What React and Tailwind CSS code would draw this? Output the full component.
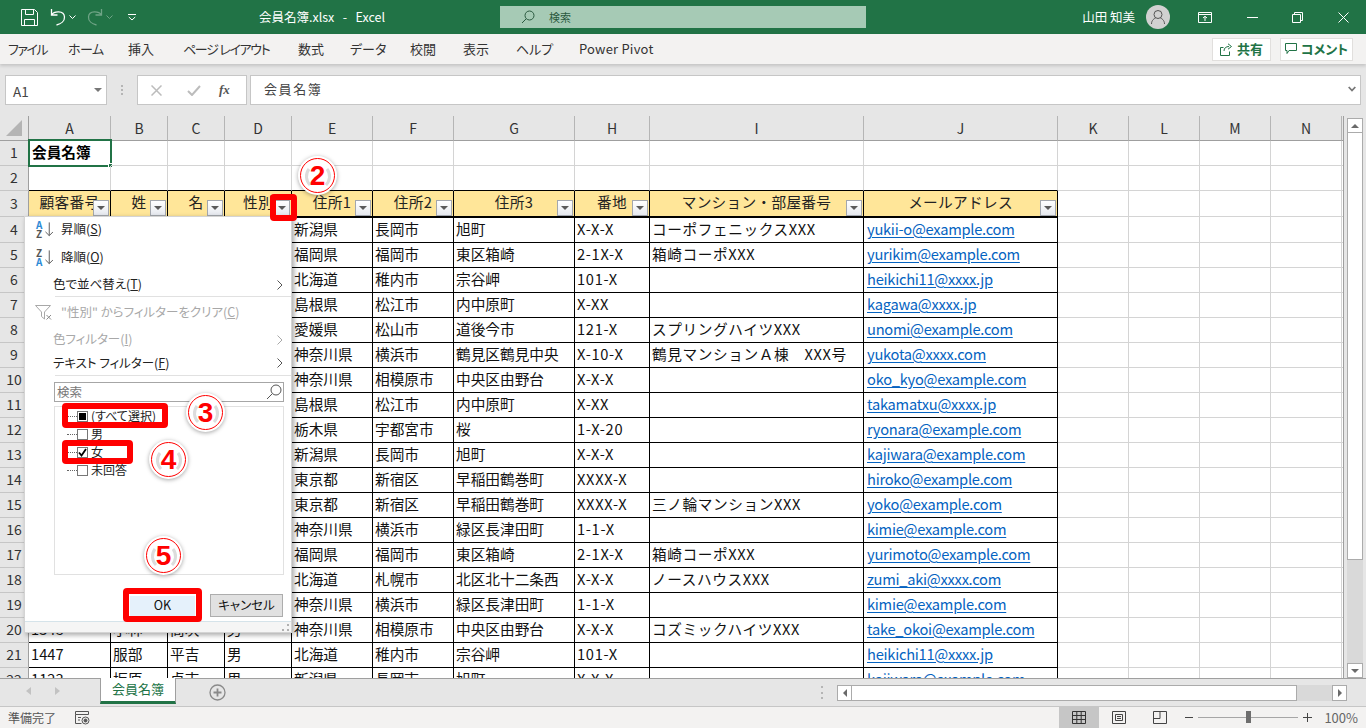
import React from "react";

const FONT = "font-['Noto_Sans_CJK_JP','Liberation_Sans',sans-serif]";

const COLS = ["A", "B", "C", "D", "E", "F", "G", "H", "I", "J", "K", "L", "M", "N"];

const RECORDS = [
  [4, "新潟県", "長岡市", "旭町", "X-X-X", "コーポフェニックスXXX", "yukii-o@example.com"],
  [5, "福岡県", "福岡市", "東区箱崎", "2-1X-X", "箱崎コーポXXX", "yurikim@example.com"],
  [6, "北海道", "稚内市", "宗谷岬", "101-X", "", "heikichi11@xxxx.jp"],
  [7, "島根県", "松江市", "内中原町", "X-XX", "", "kagawa@xxxx.jp"],
  [8, "愛媛県", "松山市", "道後今市", "121-X", "スプリングハイツXXX", "unomi@example.com"],
  [9, "神奈川県", "横浜市", "鶴見区鶴見中央", "X-10-X", "鶴見マンションＡ棟　XXX号", "yukota@xxxx.com"],
  [10, "神奈川県", "相模原市", "中央区由野台", "X-X-X", "", "oko_kyo@example.com"],
  [11, "島根県", "松江市", "内中原町", "X-XX", "", "takamatxu@xxxx.jp"],
  [12, "栃木県", "宇都宮市", "桜", "1-X-20", "", "ryonara@example.com"],
  [13, "新潟県", "長岡市", "旭町", "X-X-X", "", "kajiwara@example.com"],
  [14, "東京都", "新宿区", "早稲田鶴巻町", "XXXX-X", "", "hiroko@example.com"],
  [15, "東京都", "新宿区", "早稲田鶴巻町", "XXXX-X", "三ノ輪マンションXXX", "yoko@example.com"],
  [16, "神奈川県", "横浜市", "緑区長津田町", "1-1-X", "", "kimie@example.com"],
  [17, "福岡県", "福岡市", "東区箱崎", "2-1X-X", "箱崎コーポXXX", "yurimoto@example.com"],
  [18, "北海道", "札幌市", "北区北十二条西", "X-X-X", "ノースハウスXXX", "zumi_aki@xxxx.com"],
  [19, "神奈川県", "横浜市", "緑区長津田町", "1-1-X", "", "kimie@example.com"],
  [20, "神奈川県", "相模原市", "中央区由野台", "X-X-X", "コズミックハイツXXX", "take_okoi@example.com", "1348", "小林", "高次", "男"],
  [21, "北海道", "稚内市", "宗谷岬", "101-X", "", "heikichi11@xxxx.jp", "1447", "服部", "平吉", "男"],
  [22, "新潟県", "長岡市", "旭町", "X-X-X", "", "kajiwara@example.com", "1123", "坂原", "卓吉", "男"],
];

const HEADERS = ["顧客番号", "姓", "名", "性別", "住所1", "住所2", "住所3", "番地", "マンション・部屋番号", "メールアドレス"];

const TABS = [
  ["ファイル", "w-[60px] tracking-[-1.5px]"],
  ["ホーム", "w-[60px] tracking-[-0.5px]"],
  ["挿入", "w-[55px]"],
  ["ページ レイアウト", "w-[115px] tracking-[-1.3px]"],
  ["数式", "w-[52px]"],
  ["データ", "w-[60px]"],
  ["校閲", "w-[53px]"],
  ["表示", "w-[53px]"],
  ["ヘルプ", "w-[63px]"],
  ["Power Pivot", "w-[80px] tracking-[0.2px]"],
];

const SHEET_GRID =
  "grid grid-cols-[29px_82px_57px_57px_67px_81px_81px_121px_75px_214px_194px_71px_71px_71px_71px_2px] grid-rows-[25px_25px_25px_26px_26px] auto-rows-[25px]";

function FilterButton() {
  return (
    <span className="absolute right-[1px] bottom-[0px] flex h-[16px] w-[16px] items-center justify-center border border-[#a3a7ad] bg-gradient-to-b from-[#ffffff] to-[#e6e9ef]">
      <svg width="8" height="4" viewBox="0 0 8 4">
        <path d="M0 0h8L4 4z" fill="#5a5a5a" />
      </svg>
    </span>
  );
}

function RowHead({ n }) {
  return (
    <div className="flex items-center justify-center border-r border-b border-r-[#9f9f9f] border-b-[#c6c6c6] bg-[#e6e6e6] pb-[1px] text-[14px] text-[#333]">
      {n}
    </div>
  );
}

function Cell({ children, black, top, bottom, className = "" }) {
  const border = black ? "border-r border-b border-black" : "border-r border-b border-[#d4d4d4]";
  return (
    <div
      className={`relative flex items-center overflow-hidden whitespace-nowrap pb-[2px] pl-[2px] text-[14.67px] text-[#111] ${border} ${top ? "border-t border-t-black" : ""} ${bottom ? "border-b-black" : ""} ${className}`}
    >
      {children}
    </div>
  );
}

function Sheet() {
  return (
    <div className="relative h-[562px] w-[1344px] overflow-hidden border-r border-[#9f9f9f] bg-white">
      <div className={SHEET_GRID}>
        <div className="flex items-center justify-center border-r border-b border-[#9f9f9f] bg-[#e6e6e6]">
          <svg width="18" height="18" viewBox="0 0 18 18">
            <path d="M17 1v16H1z" fill="#b4b4b4" />
          </svg>
        </div>
        {COLS.map((c) => (
          <div
            key={c}
            className="flex items-center justify-center border-r border-b border-r-[#b5b5b5] border-b-[#9f9f9f] bg-[#e6e6e6] text-[14px] text-[#333]"
          >
            {c}
          </div>
        ))}
        <div className="border-b border-[#9f9f9f] bg-[#e6e6e6]" />

        {/* rows 1 and 2 */}
        <RowHead n={1} />
        <Cell className="font-bold !overflow-visible">
          <span className="pl-[1px] text-black">会員名簿</span>
          <span className="absolute -top-[2px] -left-[1px] h-[28px] w-[84px] border-2 border-[#217346]" />
          <span className="absolute top-[22px] left-[79px] h-[5px] w-[5px] border border-white bg-[#217346]" />
        </Cell>
        {COLS.slice(1).map((c) => (
          <Cell key={c} />
        ))}
        <div className="border-b border-[#d4d4d4]" />

        <RowHead n={2} />
        {COLS.map((c, i) => (
          <Cell key={c} bottom={i < 10} />
        ))}
        <div className="border-b border-[#d4d4d4]" />

        {/* table header */}
        <RowHead n={3} />
        {COLS.map((c, i) =>
          i < 10 ? (
            <div
              key={c}
              className="relative flex items-center justify-center overflow-hidden whitespace-nowrap border-r border-b border-black bg-[#ffe699] pb-[3px] text-[14.67px] tracking-[0.3px] text-[#222]"
            >
              {HEADERS[i]}
              <FilterButton />
            </div>
          ) : (
            <Cell key={c} />
          ),
        )}
        <div className="border-b border-[#d4d4d4]" />

        {/* table body */}
        {RECORDS.map((r) => {
          const left = r.length > 7 ? r.slice(7) : ["", "", "", ""];
          const first = r[0] === 4;
          return (
            <React.Fragment key={r[0]}>
              <RowHead n={r[0]} />
              {left.map((v, i) => (
                <Cell key={i} black top={first}>
                  {v}
                </Cell>
              ))}
              {r.slice(1, 4).map((v, i) => (
                <Cell key={i} black top={first}>
                  {v}
                </Cell>
              ))}
              <Cell black top={first} className="tracking-[0.7px]">
                {r[4]}
              </Cell>
              <Cell black top={first} className="tracking-[0.6px]">
                {r[5]}
              </Cell>
              <Cell black top={first}>
                <span className="pl-[1px] tracking-[-0.25px] text-[#0563c1] underline underline-offset-2">{r[6]}</span>
              </Cell>
              <Cell />
              <Cell />
              <Cell />
              <Cell />
              <div className="border-b border-[#d4d4d4]" />
            </React.Fragment>
          );
        })}
      </div>
    </div>
  );
}

function VScroll() {
  return (
    <div className="flex flex-1 flex-col items-center bg-[#e6e6e6] pt-[2px]">
      <div className="flex h-[560px] w-[16px] flex-col bg-[#d9d9d9]">
        <div className="flex h-[15px] items-center justify-center border border-[#ababab] bg-white">
          <svg width="8" height="4" viewBox="0 0 8 4">
            <path d="M0 4h8L4 0z" fill="#6a6a6a" />
          </svg>
        </div>
        <div className="h-[427px] border-x border-b border-[#ababab] bg-white" />
        <div className="mt-auto flex h-[15px] items-center justify-center border border-[#ababab] bg-white">
          <svg width="8" height="4" viewBox="0 0 8 4">
            <path d="M0 0h8L4 4z" fill="#6a6a6a" />
          </svg>
        </div>
      </div>
    </div>
  );
}

function TitleBar() {
  return (
    <div className="relative flex h-[34px] items-center bg-[#217346] text-white">
      <svg className="ml-[21px]" width="17" height="17" viewBox="0 0 17 17" fill="none" stroke="#fff" strokeWidth="1">
        <path d="M.5.5h13l3 3v13H.5z" />
        <path d="M4.5.5v5h8v-5M3.5 16.5v-6h10v6" />
      </svg>
      <svg className="ml-[12px]" width="16" height="18" viewBox="0 0 16 18" fill="none" stroke="#fff" strokeWidth="1.3">
        <path d="M1.5 1v6h6M1.5 7C4 3 14 2 14.5 9c.2 4-3.5 7-8 8" />
      </svg>
      <svg className="ml-[3px]" width="7" height="4" viewBox="0 0 7 4" fill="none" stroke="#fff">
        <path d="M.5.5l3 3 3-3" />
      </svg>
      <svg className="ml-[11px]" width="16" height="18" viewBox="0 0 16 18" fill="none" stroke="#6fa486" strokeWidth="1.3">
        <path d="M14.5 1v6h-6M14.5 7C12 3 2 2 1.5 9c-.2 4 3.5 7 8 8" />
      </svg>
      <svg className="ml-[3px]" width="7" height="4" viewBox="0 0 7 4" fill="none" stroke="#6fa486">
        <path d="M.5.5l3 3 3-3" />
      </svg>
      <svg className="ml-[15px]" width="8" height="7" viewBox="0 0 8 7" fill="none" stroke="#fff">
        <path d="M0 .5h8M.8 3l3.2 3 3.2-3" />
      </svg>
      <span className="ml-[123px] w-[241px] whitespace-pre text-[12.5px]">会員名簿.xlsx   -   Excel</span>
      <div className="flex h-[22px] w-[366px] items-center bg-[#a6cab5] text-[#2b5a40]">
        <svg className="ml-[21px]" width="14" height="14" viewBox="0 0 14 14" fill="none" stroke="#2b5a40">
          <circle cx="8.5" cy="5.5" r="4.5" />
          <path d="M5.2 8.8L1 13" />
        </svg>
        <span className="ml-[14px] text-[11px]">検索</span>
      </div>
      <span className="ml-auto whitespace-pre text-[12.5px]">山田 知美</span>
      <div className="ml-[11px] flex h-[24px] w-[24px] items-center justify-center rounded-full bg-[#d1d1d1]">
        <svg width="16" height="16" viewBox="0 0 16 16" fill="none" stroke="#555">
          <circle cx="8" cy="5.5" r="4" />
          <path d="M1.5 15c0-4 3-5.500 4-6M14.500 15c0-4-3-5.500-4-6" />
        </svg>
      </div>
      <svg className="ml-[28px]" width="14" height="11" viewBox="0 0 14 11" fill="none" stroke="#fff">
        <path d="M.5.5h13v10H.5zM.5 2.500h13M7 9V4.500M5 6l2-1.700L9 6" />
      </svg>
      <svg className="ml-[35px]" width="11" height="1" viewBox="0 0 11 1">
        <path d="M0 .5h11" stroke="#fff" />
      </svg>
      <svg className="ml-[34px]" width="11" height="11" viewBox="0 0 11 11" fill="none" stroke="#fff">
        <path d="M.5 2.500h8v8h-8zM2.500 2.500v-2h8v8h-2" />
      </svg>
      <svg className="mr-[17px] ml-[35px]" width="11" height="11" viewBox="0 0 11 11" stroke="#fff">
        <path d="M.5.5l10 10M10.500.5l-10 10" />
      </svg>
    </div>
  );
}

function RibbonTabs() {
  return (
    <div className="z-10 flex h-[30px] items-center bg-[#f3f2f1] pl-[8px] text-[13px] text-[#333] [font-feature-settings:'palt'] shadow-[0_2px_3px_rgba(0,0,0,0.15)]">
      {TABS.map(([t, w]) => (
        <span key={t} className={`${w} shrink-0 whitespace-pre`}>
          {t}
        </span>
      ))}
      <button className="ml-auto flex h-[23px] w-[59px] items-center justify-center gap-[4px] border border-[#e1dfdd] bg-white text-[13px] font-bold text-[#217346]">
        <svg width="13" height="13" viewBox="0 0 13 13" fill="none" stroke="#217346">
          <path d="M.5 4.500h3M.5 4.500v8h9v-4M4 8c0-3 2-4.500 5-4.500M8 .8l3.500 2.700L8 6.200" />
        </svg>
        共有
      </button>
      <button className="mr-[13px] ml-[9px] flex h-[23px] w-[73px] items-center justify-center gap-[4px] border border-[#e1dfdd] bg-white text-[13px] font-bold text-[#217346]">
        <svg width="12" height="12" viewBox="0 0 12 12" fill="none" stroke="#217346">
          <path d="M.5.500h11v7H4L2 10.500v-3H.5z" />
        </svg>
        コメント
      </button>
    </div>
  );
}

function FormulaBar() {
  return (
    <div className="flex h-[52px] items-start bg-[#e6e6e6] pt-[11px] pl-[5px]">
      <div className="flex h-[30px] w-[102px] items-center border border-[#c6c6c6] bg-white pl-[7px] text-[13.5px] text-[#444]">
        <span className="pt-[3px]">A1</span>
        <svg className="mr-[4px] ml-auto" width="8" height="4" viewBox="0 0 8 4">
          <path d="M0 0h8L4 4z" fill="#777" />
        </svg>
      </div>
      <div className="flex h-[30px] w-[30px] flex-col items-center justify-center gap-[2px]">
        <span className="h-[2px] w-[2px] bg-[#b5b5b5]" />
        <span className="h-[2px] w-[2px] bg-[#b5b5b5]" />
        <span className="h-[2px] w-[2px] bg-[#b5b5b5]" />
      </div>
      <div className="flex h-[30px] w-[110px] items-center border border-[#c6c6c6] bg-white">
        <svg className="ml-[13px]" width="11" height="11" viewBox="0 0 11 11" stroke="#bcbcbc" strokeWidth="1.5">
          <path d="M.5.5l10 10M10.500.5l-10 10" />
        </svg>
        <svg className="ml-[25px]" width="14" height="11" viewBox="0 0 14 11" fill="none" stroke="#bcbcbc" strokeWidth="2">
          <path d="M1 6l4 4 8-9" />
        </svg>
        <span className="ml-[18px] font-['Liberation_Serif',serif] text-[13px] font-bold italic text-[#555]">fx</span>
      </div>
      <div className="ml-[3px] flex h-[30px] w-[1111px] items-center border border-[#c6c6c6] bg-white pb-[2px] pl-[13px] text-[13px] tracking-[1.6px] text-[#444]">
        会員名簿
        <svg className="mr-[4px] ml-auto" width="8" height="6" viewBox="0 0 8 6" fill="none" stroke="#777" strokeWidth="1.8">
          <path d="M.7 1L4 4.500 7.300 1" />
        </svg>
      </div>
    </div>
  );
}

function SheetTabs() {
  return (
    <div className="flex h-[28px] items-start border-t border-[#9f9f9f] bg-[#e6e6e6]">
      <svg className="mt-[8px] ml-[26px]" width="5" height="8" viewBox="0 0 5 8">
        <path d="M5 0v8L0 4z" fill="#c2c2c2" />
      </svg>
      <svg className="mt-[8px] ml-[24px]" width="5" height="8" viewBox="0 0 5 8">
        <path d="M0 0v8l5-4z" fill="#c2c2c2" />
      </svg>
      <div className="-mt-[1px] ml-[40px] flex h-[26px] w-[76px] items-center justify-center border-x border-b-[3px] border-x-[#9f9f9f] border-b-[#217346] bg-white pb-[1px] text-[13px] text-[#217346]">
        会員名簿
      </div>
      <svg className="mt-[5px] ml-[33px]" width="17" height="17" viewBox="0 0 17 17" fill="none" stroke="#8a8a8a">
        <circle cx="8.500" cy="8.500" r="7.500" strokeWidth="1.300" />
        <path d="M4.500 8.500h8M8.500 4.500v8" strokeWidth="1.800" />
      </svg>
      <div className="mt-[6px] ml-[595px] flex h-[15px] flex-col justify-between py-[1px]">
        <span className="h-[2px] w-[2px] bg-[#b5b5b5]" />
        <span className="h-[2px] w-[2px] bg-[#b5b5b5]" />
        <span className="h-[2px] w-[2px] bg-[#b5b5b5]" />
      </div>
      <div className="mt-[6px] ml-[14px] flex h-[16px] w-[510px] bg-[#d9d9d9]">
        <div className="flex w-[15px] items-center justify-center border border-[#ababab] bg-white">
          <svg width="4" height="8" viewBox="0 0 4 8">
            <path d="M4 0v8L0 4z" fill="#6a6a6a" />
          </svg>
        </div>
        <div className="w-[445px] border-y border-r border-[#ababab] bg-white" />
        <div className="ml-auto flex w-[15px] items-center justify-center border border-[#ababab] bg-white">
          <svg width="4" height="8" viewBox="0 0 4 8">
            <path d="M0 0v8l4-4z" fill="#6a6a6a" />
          </svg>
        </div>
      </div>
    </div>
  );
}

function StatusBar() {
  return (
    <div className="flex h-[22px] items-center border-t border-[#c6c6c6] bg-[#f3f2f1] text-[#555]">
      <span className="ml-[8px] text-[12px]">準備完了</span>
      <svg className="ml-[19px]" width="15" height="14" viewBox="0 0 15 14" fill="none" stroke="#555">
        <path d="M.5 3.500V.5h13v3M.5 3.500h13M.5 3.500v9h6M3 6.500h3M3 9h2" />
        <circle cx="10.500" cy="9.500" r="3.500" />
        <circle cx="10.500" cy="9.500" r="1.500" fill="#555" />
      </svg>
      <div className="ml-auto flex h-[21px] w-[40px] items-center justify-center bg-[#c6c6c6]">
        <svg width="14" height="13" viewBox="0 0 14 13" fill="none" stroke="#333">
          <path d="M.5.5h13v12H.5zM.5 4.500h13M.5 8.500h13M4.800.5v12M9.200.5v12" />
        </svg>
      </div>
      <svg className="ml-[13px]" width="14" height="13" viewBox="0 0 14 13" fill="none" stroke="#444">
        <path d="M.5.5h13v12H.5zM3.500 3.500h7v6h-7zM5 5.500h4M5 7.500h4" />
      </svg>
      <svg className="ml-[27px]" width="14" height="13" viewBox="0 0 14 13" fill="none" stroke="#444">
        <path d="M.5.5h13v12H.5zM.5 7.500h6.500V.5" />
      </svg>
      <svg className="ml-[18px]" width="8" height="1" viewBox="0 0 8 1">
        <path d="M0 .5h8" stroke="#444" />
      </svg>
      <div className="relative ml-[5px] h-[1px] w-[100px] bg-[#a6a6a6]">
        <span className="absolute -top-[6px] left-[48px] h-[12px] w-[5px] bg-[#6e6e6e]" />
      </div>
      <svg className="ml-[5px]" width="9" height="9" viewBox="0 0 9 9">
        <path d="M0 4.500h9M4.500 0v9" stroke="#444" />
      </svg>
      <span className="mr-[8px] ml-[12px] text-[13px] text-[#666]">100%</span>
    </div>
  );
}

function SortIcon({ top, bottom }) {
  const tone = (l) => (l === "A" ? "text-[#2e8bd6]" : "text-[#555]");
  return (
    <span className="flex w-[28px] items-center pl-[11px]">
      <span className="flex w-[9px] flex-col text-[10px] leading-[9px] font-bold">
        <span className={tone(top)}>{top}</span>
        <span className={tone(bottom)}>{bottom}</span>
      </span>
      <svg width="9" height="15" viewBox="0 0 9 15" fill="none" stroke="#555">
        <path d="M4.500 0v14M.5 10l4 4 4-4" />
      </svg>
    </span>
  );
}

function Chevron({ dim }) {
  return (
    <svg className="mr-[8px] ml-auto" width="6" height="10" viewBox="0 0 6 10" fill="none" stroke={dim ? "#a8a8a8" : "#555"}>
      <path d="M.5.5L5 5 .5 9.500" />
    </svg>
  );
}

function TreeRow({ label, box }) {
  return (
    <div className="flex h-[18px] items-center pl-[12px] text-[12px] text-[#222]">
      <span className="mt-[1px] w-[10px] border-b border-dotted border-[#666]" />
      <span className="flex h-[11px] w-[11px] items-center justify-center border border-[#777] bg-white">
        {box === "mixed" && <span className="h-[7px] w-[7px] bg-black" />}
        {box === "check" && (
          <svg width="9" height="9" viewBox="0 0 9 9" fill="none" stroke="#000" strokeWidth="1.800">
            <path d="M1 4.500l2.500 3L8 1" />
          </svg>
        )}
      </span>
      <span className="ml-[3px] leading-[14px]">{label}</span>
    </div>
  );
}

function FilterMenu() {
  return (
    <div className="absolute top-[216px] left-[24px] flex h-[417px] w-[268px] flex-col border border-[#d4d4d4] bg-white text-[12.5px] text-[#222] [font-feature-settings:'palt'] shadow-[2px_2px_5px_rgba(0,0,0,0.35)]">
      <div className="flex h-[24px] shrink-0 items-center">
        <SortIcon top="A" bottom="Z" />
        <span className="ml-[8px]">
          昇順(<span className="underline">S</span>)
        </span>
      </div>
      <div className="flex h-[32px] shrink-0 items-center">
        <SortIcon top="Z" bottom="A" />
        <span className="ml-[8px]">
          降順(<span className="underline">O</span>)
        </span>
      </div>
      <div className="flex h-[23px] shrink-0 items-center pl-[28px]">
        <span>
          色で並べ替え(<span className="underline">T</span>)
        </span>
        <Chevron />
      </div>
      <div className="ml-[30px] h-[1px] shrink-0 bg-[#e1e1e1]" />
      <div className="flex h-[31px] shrink-0 items-center pl-[10px] text-[#a8a8a8]">
        <svg width="18" height="16" viewBox="0 0 18 16" fill="none" stroke="#a8a8a8">
          <path d="M.5.500h15L9.500 7v7l-3-2.500V7z" />
          <path d="M11.500 10l4.500 4.500M16 10l-4.500 4.500" stroke="#8a8a8a" />
        </svg>
        <span className="ml-[8px] whitespace-pre">
          "性別" からフィルターをクリア(<span className="underline">C</span>)
        </span>
      </div>
      <div className="flex h-[23px] shrink-0 items-center pl-[28px] text-[#a8a8a8]">
        <span>
          色フィルター(<span className="underline">I</span>)
        </span>
        <Chevron dim />
      </div>
      <div className="flex h-[24px] shrink-0 items-center pl-[28px]">
        <span className="whitespace-pre">
          テキスト フィルター(<span className="underline">F</span>)
        </span>
        <Chevron />
      </div>
      <div className="ml-[30px] h-[1px] shrink-0 bg-[#e1e1e1]" />
      <div className="mt-[6px] ml-[29px] flex h-[20px] w-[230px] shrink-0 items-center border border-[#a6a6a6] pl-[2px] text-[#777]">
        検索
        <svg className="mr-[1px] ml-auto" width="16" height="16" viewBox="0 0 16 16" fill="none" stroke="#555">
          <circle cx="10" cy="6" r="5" />
          <path d="M6.300 9.700L1 15" />
        </svg>
      </div>
      <div className="mt-[4px] ml-[29px] flex h-[169px] w-[230px] shrink-0 flex-col border border-[#e1e1e1]">
        <TreeRow label="(すべて選択)" box="mixed" />
        <TreeRow label="男" />
        <TreeRow label="女" box="check" />
        <TreeRow label="未回答" />
      </div>
      <div className="mt-[19px] flex items-center">
        <div className="ml-[105px] flex h-[20px] w-[65px] items-center justify-center bg-[#e5f1fb] text-[#111]">OK</div>
        <div className="ml-[15px] flex h-[23px] w-[73px] items-center justify-center border border-[#adadad] bg-[#e1e1e1] text-[#111]">
          キャンセル
        </div>
      </div>
      <div className="mt-auto flex h-[11px] items-center justify-end border-t border-[#d5e3ea] bg-[#f5f5f5] pr-[2px]">
        <svg width="7" height="7" viewBox="0 0 7 7" fill="#b0b0b0">
          <path d="M5 0h2v2H5zM5 5h2v2H5zM0 5h2v2H0z" />
        </svg>
      </div>
    </div>
  );
}

function Badge({ n, className }) {
  return (
    <div
      className={`absolute flex h-[39px] w-[39px] items-center justify-center rounded-full bg-white shadow-[0_1px_4px_rgba(0,0,0,0.35)] ${className}`}
    >
      <div className="relative flex h-[35px] w-[35px] items-center justify-center rounded-full border-[1.5px] border-[#ff0000]">
        <svg className="absolute" width="32" height="32" viewBox="0 0 32 32" fill="none" stroke="#dcdcdc" strokeWidth="3">
          <path d="M7 9C3 14 4 21 8 25M25 9c4 5 3 12-1 16" />
        </svg>
        <span className="relative font-['Liberation_Sans',sans-serif] text-[28px] leading-none font-bold text-[#ff0000]">{n}</span>
      </div>
    </div>
  );
}

function RedFrame({ className }) {
  return <div className={`absolute rounded-[4px] border-[6px] border-[#ff0000] ${className}`} />;
}

export default function App() {
  return (
    <div className={`relative flex h-[728px] w-[1366px] flex-col overflow-hidden bg-[#e6e6e6] ${FONT}`}>
      <TitleBar />
      <RibbonTabs />
      <FormulaBar />
      <div className="flex">
        <Sheet />
        <VScroll />
      </div>
      <SheetTabs />
      <StatusBar />

      <FilterMenu />
      <RedFrame className="top-[194px] left-[270px] h-[27px] w-[27px]" />
      <RedFrame className="top-[403px] left-[62px] h-[25px] w-[106px]" />
      <RedFrame className="top-[440px] left-[62px] h-[24px] w-[71px]" />
      <RedFrame className="top-[588px] left-[123px] h-[34px] w-[79px]" />
      <Badge n={2} className="top-[156px] left-[298px]" />
      <Badge n={3} className="top-[393px] left-[186px]" />
      <Badge n={4} className="top-[440px] left-[149px]" />
      <Badge n={5} className="top-[536px] left-[144px]" />
    </div>
  );
}
